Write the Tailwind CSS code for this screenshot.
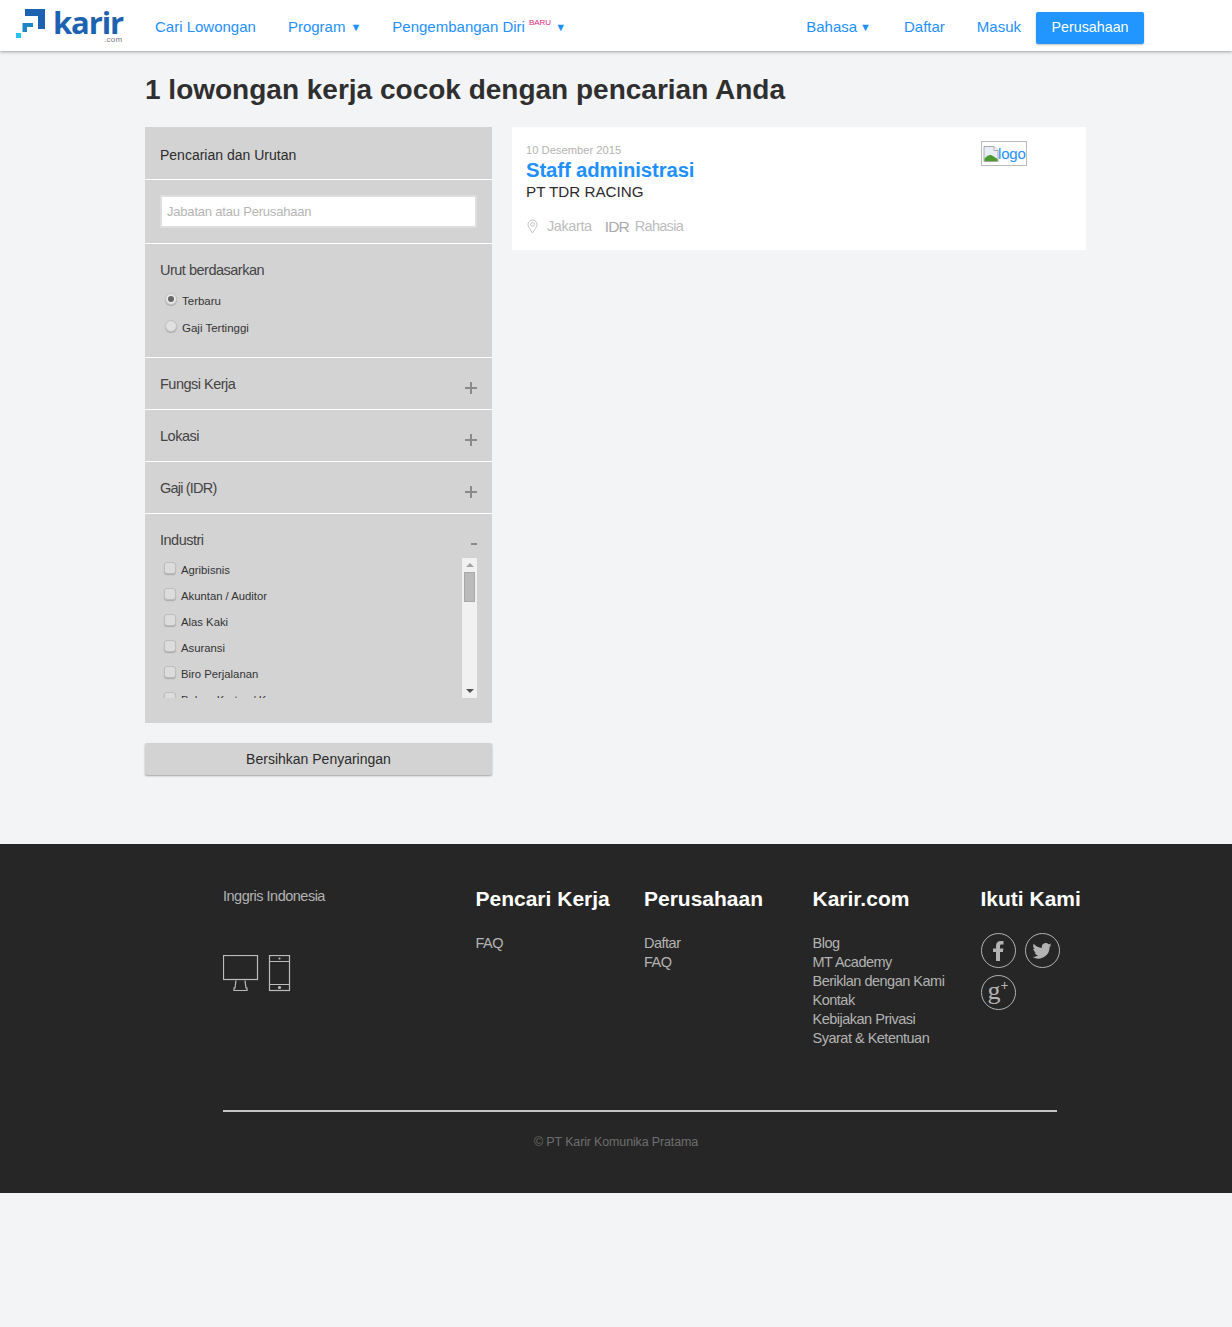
<!DOCTYPE html>
<html lang="en">
<head>
<meta charset="UTF-8">
<title>Karir.com</title>
<script src="https://cdn.jsdelivr.net/npm/@tailwindcss/browser@4"></script>
</head>
<body class="bg-[#f3f4f6] min-h-[1327px] font-['Liberation_Sans',Arial,sans-serif] text-[#2f2f2f]">

<!-- navbar -->
<header class="relative z-10 h-[51px] bg-white shadow-[0_1px_3px_rgba(0,0,0,0.35)] flex items-center text-[15px] text-[#1e90ff]">
  <div class="relative ml-[16px] w-[139px] h-[51px] shrink-0">
    <svg class="absolute left-0 top-[9px]" width="30" height="29" viewBox="0 0 30 29">
      <path d="M9 0H29V20H22V7H9Z" fill="#1c62b0"/>
      <path d="M4.500 15H15V19H9V24H4.500Z" fill="#1b87c4" transform="translate(2 -1)"/>
      <rect x="0" y="24" width="5" height="5" fill="#2ac3f2"/>
    </svg>
    <span class="absolute left-[37px] top-[8px] font-['Open_Sans',sans-serif] font-bold text-[31px] leading-[28px] tracking-[-1.100px] text-[#1c62b0]">karir</span>
    <span class="absolute left-[88px] top-[35px] text-[8px] leading-[9px] text-[#777] tracking-[0.3px]">.com</span>
  </div>
  <nav class="flex items-center gap-[32px] h-full pt-[3px]">
    <a>Cari Lowongan</a>
    <a class="flex items-center">Program<span class="ml-[5px] text-[11px]">▼</span></a>
    <a class="flex items-center -ml-[1px]">Pengembangan Diri<sup class="ml-[4px] -mt-[9px] text-[8px] top-0 text-[#e6277e]">BARU</sup><span class="ml-[4px] text-[11px]">▼</span></a>
  </nav>
  <nav class="flex items-center h-full ml-auto mr-[88px] pt-[3px]">
    <a class="flex items-center">Bahasa<span class="ml-[3px] text-[11px]">▼</span></a>
    <a class="ml-[33px]">Daftar</a>
    <a class="ml-[32px]">Masuk</a>
    <a class="ml-[15px] mt-[2px] w-[108px] h-[32px] flex items-center justify-center rounded-[2px] bg-[#2196ff] text-[14.300px] text-white shadow-[0_1px_2px_rgba(0,0,0,0.25)]">Perusahaan</a>
  </nav>
</header>

<main class="w-[941px] ml-[145px] h-[793px]">
  <h1 class="pt-[22px] h-[76px] text-[28px] leading-[33px] font-bold">1 lowongan kerja cocok dengan pencarian Anda</h1>

  <div class="flex gap-[20px] items-start">
    <!-- filters -->
    <aside class="w-[347px] shrink-0">
      <div class="bg-[#d3d3d3]">
        <div class="h-[53px] border-b border-white pl-[15px] pt-[19px] text-[14px] leading-[18px] text-[#2b2b2b]">Pencarian dan Urutan</div>
        <div class="h-[64px] border-b border-white px-[15px] pt-[15px]">
          <div class="h-[33px] bg-white border-2 border-[#dedede] pl-[5px] pt-[1px] flex items-center text-[13px] text-[#b5b5b5] tracking-[-0.2px]">Jabatan atau Perusahaan</div>
        </div>
        <div class="h-[114px] border-b border-white pl-[15px] pt-[17px]">
          <div class="text-[14.500px] leading-[18px] tracking-[-0.5px] text-[#444]">Urut berdasarkan</div>
          <div class="flex items-center mt-[15px] ml-[5px] h-[14px] text-[11.500px] text-[#333]">
            <span class="w-[12px] h-[12px] -mt-[5px] rounded-full bg-[#e6e6e6] border border-[#c2c2c2] shadow-[0_1px_1px_rgba(0,0,0,0.2)] flex items-center justify-center"><span class="w-[6px] h-[6px] rounded-full bg-[#666]"></span></span>
            <span class="ml-[5px] pt-[2px]">Terbaru</span>
          </div>
          <div class="flex items-center mt-[13px] ml-[5px] h-[14px] text-[11.500px] text-[#333]">
            <span class="w-[12px] h-[12px] -mt-[5px] rounded-full bg-[#e0e0e0] border border-[#c2c2c2] shadow-[0_1px_1px_rgba(0,0,0,0.2)]"></span>
            <span class="ml-[5px] pt-[2px]">Gaji Tertinggi</span>
          </div>
        </div>
        <div class="h-[52px] border-b border-white pl-[15px] pr-[15px] pt-[17px] flex justify-between text-[14.500px] leading-[18px] tracking-[-0.5px] text-[#444]">
          <span>Fungsi Kerja</span>
          <svg class="mt-[7px]" width="12" height="12" viewBox="0 0 12 12"><path d="M5 0h2v5h5v2H7v5H5V7H0V5h5z" fill="#8a8a8a"/></svg>
        </div>
        <div class="h-[52px] border-b border-white pl-[15px] pr-[15px] pt-[17px] flex justify-between text-[14.500px] leading-[18px] tracking-[-0.5px] text-[#444]">
          <span>Lokasi</span>
          <svg class="mt-[7px]" width="12" height="12" viewBox="0 0 12 12"><path d="M5 0h2v5h5v2H7v5H5V7H0V5h5z" fill="#8a8a8a"/></svg>
        </div>
        <div class="h-[52px] border-b border-white pl-[15px] pr-[15px] pt-[17px] flex justify-between text-[14.500px] leading-[18px] tracking-[-0.5px] text-[#444]">
          <span class="tracking-[-0.8px]">Gaji (IDR)</span>
          <svg class="mt-[7px]" width="12" height="12" viewBox="0 0 12 12"><path d="M5 0h2v5h5v2H7v5H5V7H0V5h5z" fill="#8a8a8a"/></svg>
        </div>
        <div class="h-[209px] pl-[15px] pr-[15px] pt-[17px]">
          <div class="h-[27px] flex justify-between text-[14.500px] leading-[18px] tracking-[-0.5px] text-[#444]">
            <span>Industri</span>
            <span class="w-[6px] h-[2px] mt-[12px] mr-0 bg-[#8a8a8a]"></span>
          </div>
          <div class="flex h-[140px] justify-between">
            <ul class="h-[140px] overflow-hidden pl-[4px] text-[11.300px] text-[#333]">
              <li class="h-[26px] -mt-[1px] flex items-center"><span class="w-[12px] h-[12px] -mt-[4px] rounded-[3px] bg-[#dcdcdc] border border-[#bdbdbd] shadow-[0_1px_1px_rgba(0,0,0,0.2)]"></span><span class="ml-[5px]">Agribisnis</span></li>
              <li class="h-[26px] flex items-center"><span class="w-[12px] h-[12px] -mt-[4px] rounded-[3px] bg-[#dcdcdc] border border-[#bdbdbd] shadow-[0_1px_1px_rgba(0,0,0,0.2)]"></span><span class="ml-[5px]">Akuntan / Auditor</span></li>
              <li class="h-[26px] flex items-center"><span class="w-[12px] h-[12px] -mt-[4px] rounded-[3px] bg-[#dcdcdc] border border-[#bdbdbd] shadow-[0_1px_1px_rgba(0,0,0,0.2)]"></span><span class="ml-[5px]">Alas Kaki</span></li>
              <li class="h-[26px] flex items-center"><span class="w-[12px] h-[12px] -mt-[4px] rounded-[3px] bg-[#dcdcdc] border border-[#bdbdbd] shadow-[0_1px_1px_rgba(0,0,0,0.2)]"></span><span class="ml-[5px]">Asuransi</span></li>
              <li class="h-[26px] flex items-center"><span class="w-[12px] h-[12px] -mt-[4px] rounded-[3px] bg-[#dcdcdc] border border-[#bdbdbd] shadow-[0_1px_1px_rgba(0,0,0,0.2)]"></span><span class="ml-[5px]">Biro Perjalanan</span></li>
              <li class="h-[26px] flex items-center"><span class="w-[12px] h-[12px] -mt-[4px] rounded-[3px] bg-[#dcdcdc] border border-[#bdbdbd] shadow-[0_1px_1px_rgba(0,0,0,0.2)]"></span><span class="ml-[5px]">Bahan Kertas / Kayu</span></li>
            </ul>
            <div class="w-[15px] h-[140px] bg-[#f1f1f1] flex flex-col items-center">
              <span class="mt-[5px] w-0 h-0 border-x-[4px] border-x-transparent border-b-[4px] border-b-[#a3a3a3]"></span>
              <span class="mt-[5px] w-[11px] h-[30px] bg-[#bababa] border border-[#a9a9a9]"></span>
              <span class="mt-auto mb-[5px] w-0 h-0 border-x-[4px] border-x-transparent border-t-[4px] border-t-[#505050]"></span>
            </div>
          </div>
        </div>
      </div>
      <button class="mt-[20px] w-[347px] h-[32px] rounded-[2px] bg-[#d3d3d3] text-[14px] text-[#2b2b2b] shadow-[0_1px_2px_rgba(0,0,0,0.35)]">Bersihkan Penyaringan</button>
    </aside>

    <!-- result -->
    <article class="w-[574px] h-[123px] bg-white flex justify-between pl-[14px] pr-[59px]">
      <div>
        <div class="pt-[17px] text-[11.200px] leading-[13px] text-[#b3b3b3]">10 Desember 2015</div>
        <div class="text-[20.300px] leading-[26px] font-bold text-[#1e90ff] tracking-[-0.1px]">Staff administrasi</div>
        <div class="text-[15.200px] leading-[18px] text-[#2b2b2b]">PT TDR RACING</div>
        <div class="mt-[17px] flex items-center h-[18px] text-[14.500px] text-[#bdbdbd] tracking-[-0.4px]">
          <svg class="mr-[9px] ml-[1px] -mt-[2px]" width="11" height="15" viewBox="0 0 11 15" fill="none" stroke="#c4c4c4"><path d="M5.500 14C3.500 10.500 1 8 1 5.500a4.500 4.500 0 0 1 9 0C10 8 7.500 10.500 5.500 14Z"/><circle cx="5.500" cy="5.500" r="1.800"/></svg>
          <span>Jakarta</span>
          <span class="ml-[13px] text-[#aaa] text-[15.500px] tracking-[-0.9px]">IDR</span>
          <span class="ml-[6px] tracking-[-0.7px]">Rahasia</span>
        </div>
      </div>
      <div class="mt-[14px] w-[46px] h-[25px] border border-[#bbb] flex items-center pl-[1px] text-[15px] text-[#1e90ff]">
        <svg class="shrink-0" width="16" height="16" viewBox="0 0 16 16"><path d="M1 0.500H11L15 4.500V15.500H1Z" fill="#e8eef8" stroke="#a8a8a8"/><path d="M11 .5V4.500H15" fill="#fff" stroke="#a8a8a8"/><path d="M1.500 15V12.500C4 10 7 7.500 10 10L14.500 13V15Z" fill="#4f9a2e"/></svg>
        <span class="pt-[2px] -ml-[1px] tracking-[-0.2px]">logo</span>
      </div>
    </article>
  </div>
</main>

<!-- footer -->
<footer class="h-[349px] bg-[#262626] text-[#b3b3b3]">
  <div class="w-[834px] ml-[223px]">
    <div class="h-[266px] grid grid-cols-[252.500px_168.500px_168.500px_168px_76px] text-[14.500px] leading-[19px] tracking-[-0.5px]">
      <div class="pt-[43px]">
        <div class="leading-[19px]">Inggris Indonesia</div>
        <svg class="mt-[49px]" width="68" height="37" viewBox="0 0 68 37" fill="none" stroke="#bcbcbc" stroke-width="1.200">
          <rect x="0.500" y="0.500" width="34" height="24"/>
          <path d="M13 25.500 12 33H11V35.500H24V33H23L22 25.500"/>
          <rect x="46.500" y="0.500" width="20" height="35"/>
          <path d="M46.500 6.500H66.500M46.500 29.500H66.500"/>
          <circle cx="56.500" cy="32.500" r="1" fill="#bcbcbc"/>
          <circle cx="56.500" cy="3.500" r=".5" fill="#bcbcbc"/>
        </svg>
      </div>
      <div class="pt-[43px]">
        <h3 class="h-[47px] text-[21px] leading-[24px] font-bold text-white tracking-normal">Pencari Kerja</h3>
        <a class="block">FAQ</a>
      </div>
      <div class="pt-[43px]">
        <h3 class="h-[47px] text-[21px] leading-[24px] font-bold text-white tracking-normal">Perusahaan</h3>
        <a class="block">Daftar</a>
        <a class="block">FAQ</a>
      </div>
      <div class="pt-[43px]">
        <h3 class="h-[47px] text-[21px] leading-[24px] font-bold text-white tracking-normal">Karir.com</h3>
        <a class="block">Blog</a>
        <a class="block">MT Academy</a>
        <a class="block whitespace-nowrap">Beriklan dengan Kami</a>
        <a class="block">Kontak</a>
        <a class="block">Kebijakan Privasi</a>
        <a class="block">Syarat &amp; Ketentuan</a>
      </div>
      <div class="pt-[43px]">
        <h3 class="h-[46px] whitespace-nowrap text-[21px] leading-[24px] font-bold text-white tracking-normal">Ikuti Kami</h3>
        <div class="flex flex-wrap gap-x-[9px] gap-y-[7px] w-[80px]">
          <span class="w-[35px] h-[35px] rounded-full border border-[#b3b3b3] flex items-center justify-center">
            <svg width="11" height="20" viewBox="0 0 11 20"><path d="M3 20V11H0V7.500H3V5C3 1.800 5 0 7.800 0H10.500V3.500H8.600C7.300 3.500 7 4.200 7 5.200V7.500H10.400L9.900 11H7V20Z" fill="#b3b3b3"/></svg>
          </span>
          <span class="w-[35px] h-[35px] rounded-full border border-[#b3b3b3] flex items-center justify-center">
            <svg width="20" height="16" viewBox="0 0 24 20"><path d="M24 2.400c-.9.400-1.800.7-2.800.8 1-.6 1.800-1.600 2.200-2.700-1 .6-2 1-3.100 1.200A4.900 4.900 0 0 0 11.900 6.200C7.800 6 4.200 4 1.700.9c-1.300 2.200-.7 5.100 1.500 6.600-.8 0-1.600-.2-2.200-.6 0 2.400 1.700 4.400 3.900 4.900-.7.200-1.500.2-2.200.1.600 1.900 2.400 3.300 4.600 3.400A9.900 9.900 0 0 1 0 17.300 14 14 0 0 0 21.500 4.900c1-.7 1.800-1.500 2.500-2.500Z" fill="#b3b3b3"/></svg>
          </span>
          <span class="w-[35px] h-[35px] rounded-full border border-[#b3b3b3] flex items-center justify-center font-['Liberation_Serif',serif] text-[26px] leading-[30px] tracking-normal text-[#b3b3b3] pb-[4px]">g<sup class="text-[14px] top-[-5px] font-bold">+</sup></span>
        </div>
      </div>
    </div>
    <div class="h-[2px] bg-[#c4c4c4]"></div>
  </div>
  <p class="pt-[22px] text-center text-[12.500px] leading-[16px] text-[#6e6e6e] tracking-[-0.15px]">© PT Karir Komunika Pratama</p>
</footer>
</body>
</html>
